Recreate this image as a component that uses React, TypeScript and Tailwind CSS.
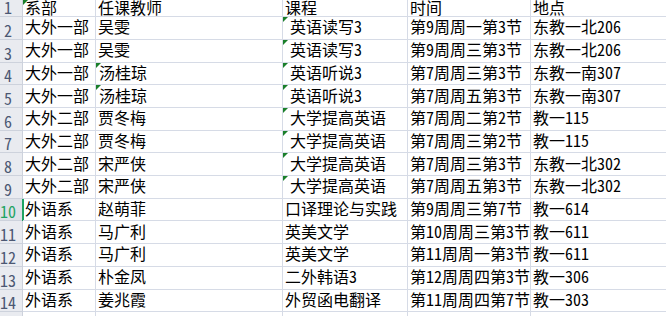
import React from 'react';

type Row = {
  n: number;
  cells: string[];
  marks?: number[]; // columns with the green corner mark
  indent?: number[]; // columns with a small leading indent
};

const rows: Row[] = [
  { n: 1, cells: ['系部', '任课教师', '课程', '时间', '地点'], marks: [0] },
  { n: 2, cells: ['大外一部', '吴雯', '英语读写3', '第9周周一第3节', '东教一北206'], marks: [2], indent: [2] },
  { n: 3, cells: ['大外一部', '吴雯', '英语读写3', '第9周周三第3节', '东教一北206'], marks: [2], indent: [2] },
  { n: 4, cells: ['大外一部', '汤桂琼', '英语听说3', '第7周周三第3节', '东教一南307'], marks: [1, 2], indent: [1, 2] },
  { n: 5, cells: ['大外一部', '汤桂琼', '英语听说3', '第7周周五第3节', '东教一南307'], marks: [1, 2], indent: [1, 2] },
  { n: 6, cells: ['大外二部', '贾冬梅', '大学提高英语', '第7周周二第2节', '教一115'], marks: [2], indent: [2] },
  { n: 7, cells: ['大外二部', '贾冬梅', '大学提高英语', '第7周周三第2节', '教一115'], marks: [2], indent: [2] },
  { n: 8, cells: ['大外二部', '宋严侠', '大学提高英语', '第7周周三第3节', '东教一北302'], marks: [2], indent: [2] },
  { n: 9, cells: ['大外二部', '宋严侠', '大学提高英语', '第7周周五第3节', '东教一北302'], marks: [2], indent: [2] },
  { n: 10, cells: ['外语系', '赵萌菲', '口译理论与实践', '第9周周三第7节', '教一614'] },
  { n: 11, cells: ['外语系', '马广利', '英美文学', '第10周周三第3节', '教一611'] },
  { n: 12, cells: ['外语系', '马广利', '英美文学', '第11周周一第3节', '教一611'] },
  { n: 13, cells: ['外语系', '朴金凤', '二外韩语3', '第12周周四第3节', '教一306'] },
  { n: 14, cells: ['外语系', '姜兆霞', '外贸函电翻译', '第11周周四第7节', '教一303'] },
  { n: 15, cells: ['', '', '', '', ''] },
];

const colWidths = ['w-[73px]', 'w-[187px]', 'w-[125px]', 'w-[123px]', 'flex-1'];

export default function App() {
  return (
    <div
      className="w-[666px] h-[316px] overflow-hidden bg-white text-black text-[16px] [font-feature-settings:'hwid'] font-['Noto_Sans_CJK_SC',sans-serif]"
    >
      {rows.map((row) => {
        const active = row.n === 10;
        const first = row.n === 1;
        return (
          <div
            key={row.n}
            className={`relative flex ${first ? 'h-[17.3px]' : 'h-[22.7px]'}`}
          >
            {/* Row header */}
            <div
              className={`w-[23px] shrink-0 flex items-end border-r border-b border-[#cdd2dc] ${
                active ? 'bg-[#dde1e8] text-[#1fa463]' : 'bg-[#e9ebf0] text-[#4c5873]'
              }`}
            >
              <span className={`w-[16px] text-center ${first ? 'leading-[16px] pb-[1px]' : 'leading-[18px]'}`}>
                {row.n}
              </span>
            </div>
            {active && <div className="absolute left-[22px] top-0 bottom-0 w-[2px] bg-[#1fa463]" />}

            {row.cells.map((text, i) => (
              <div
                key={i}
                className={`relative ${colWidths[i]} shrink-0 flex items-end whitespace-nowrap border-b border-[#d6dbe6] ${
                  i < 4 ? 'border-r' : ''
                } ${row.indent?.includes(i) ? (i === 2 ? 'pl-[7px]' : 'pl-[3px]') : 'pl-[2px]'} ${
                  first ? 'pb-[2.3px]' : 'pb-[2.5px]'
                }`}
              >
                {row.marks?.includes(i) && (
                  <div className="absolute left-0 top-0 w-0 h-0 border-t-[5px] border-r-[5px] border-t-[#1a7f2a] border-r-transparent" />
                )}
                <span className={first ? 'leading-[14px]' : 'leading-[19px]'}>{text}</span>
              </div>
            ))}
          </div>
        );
      })}
    </div>
  );
}
